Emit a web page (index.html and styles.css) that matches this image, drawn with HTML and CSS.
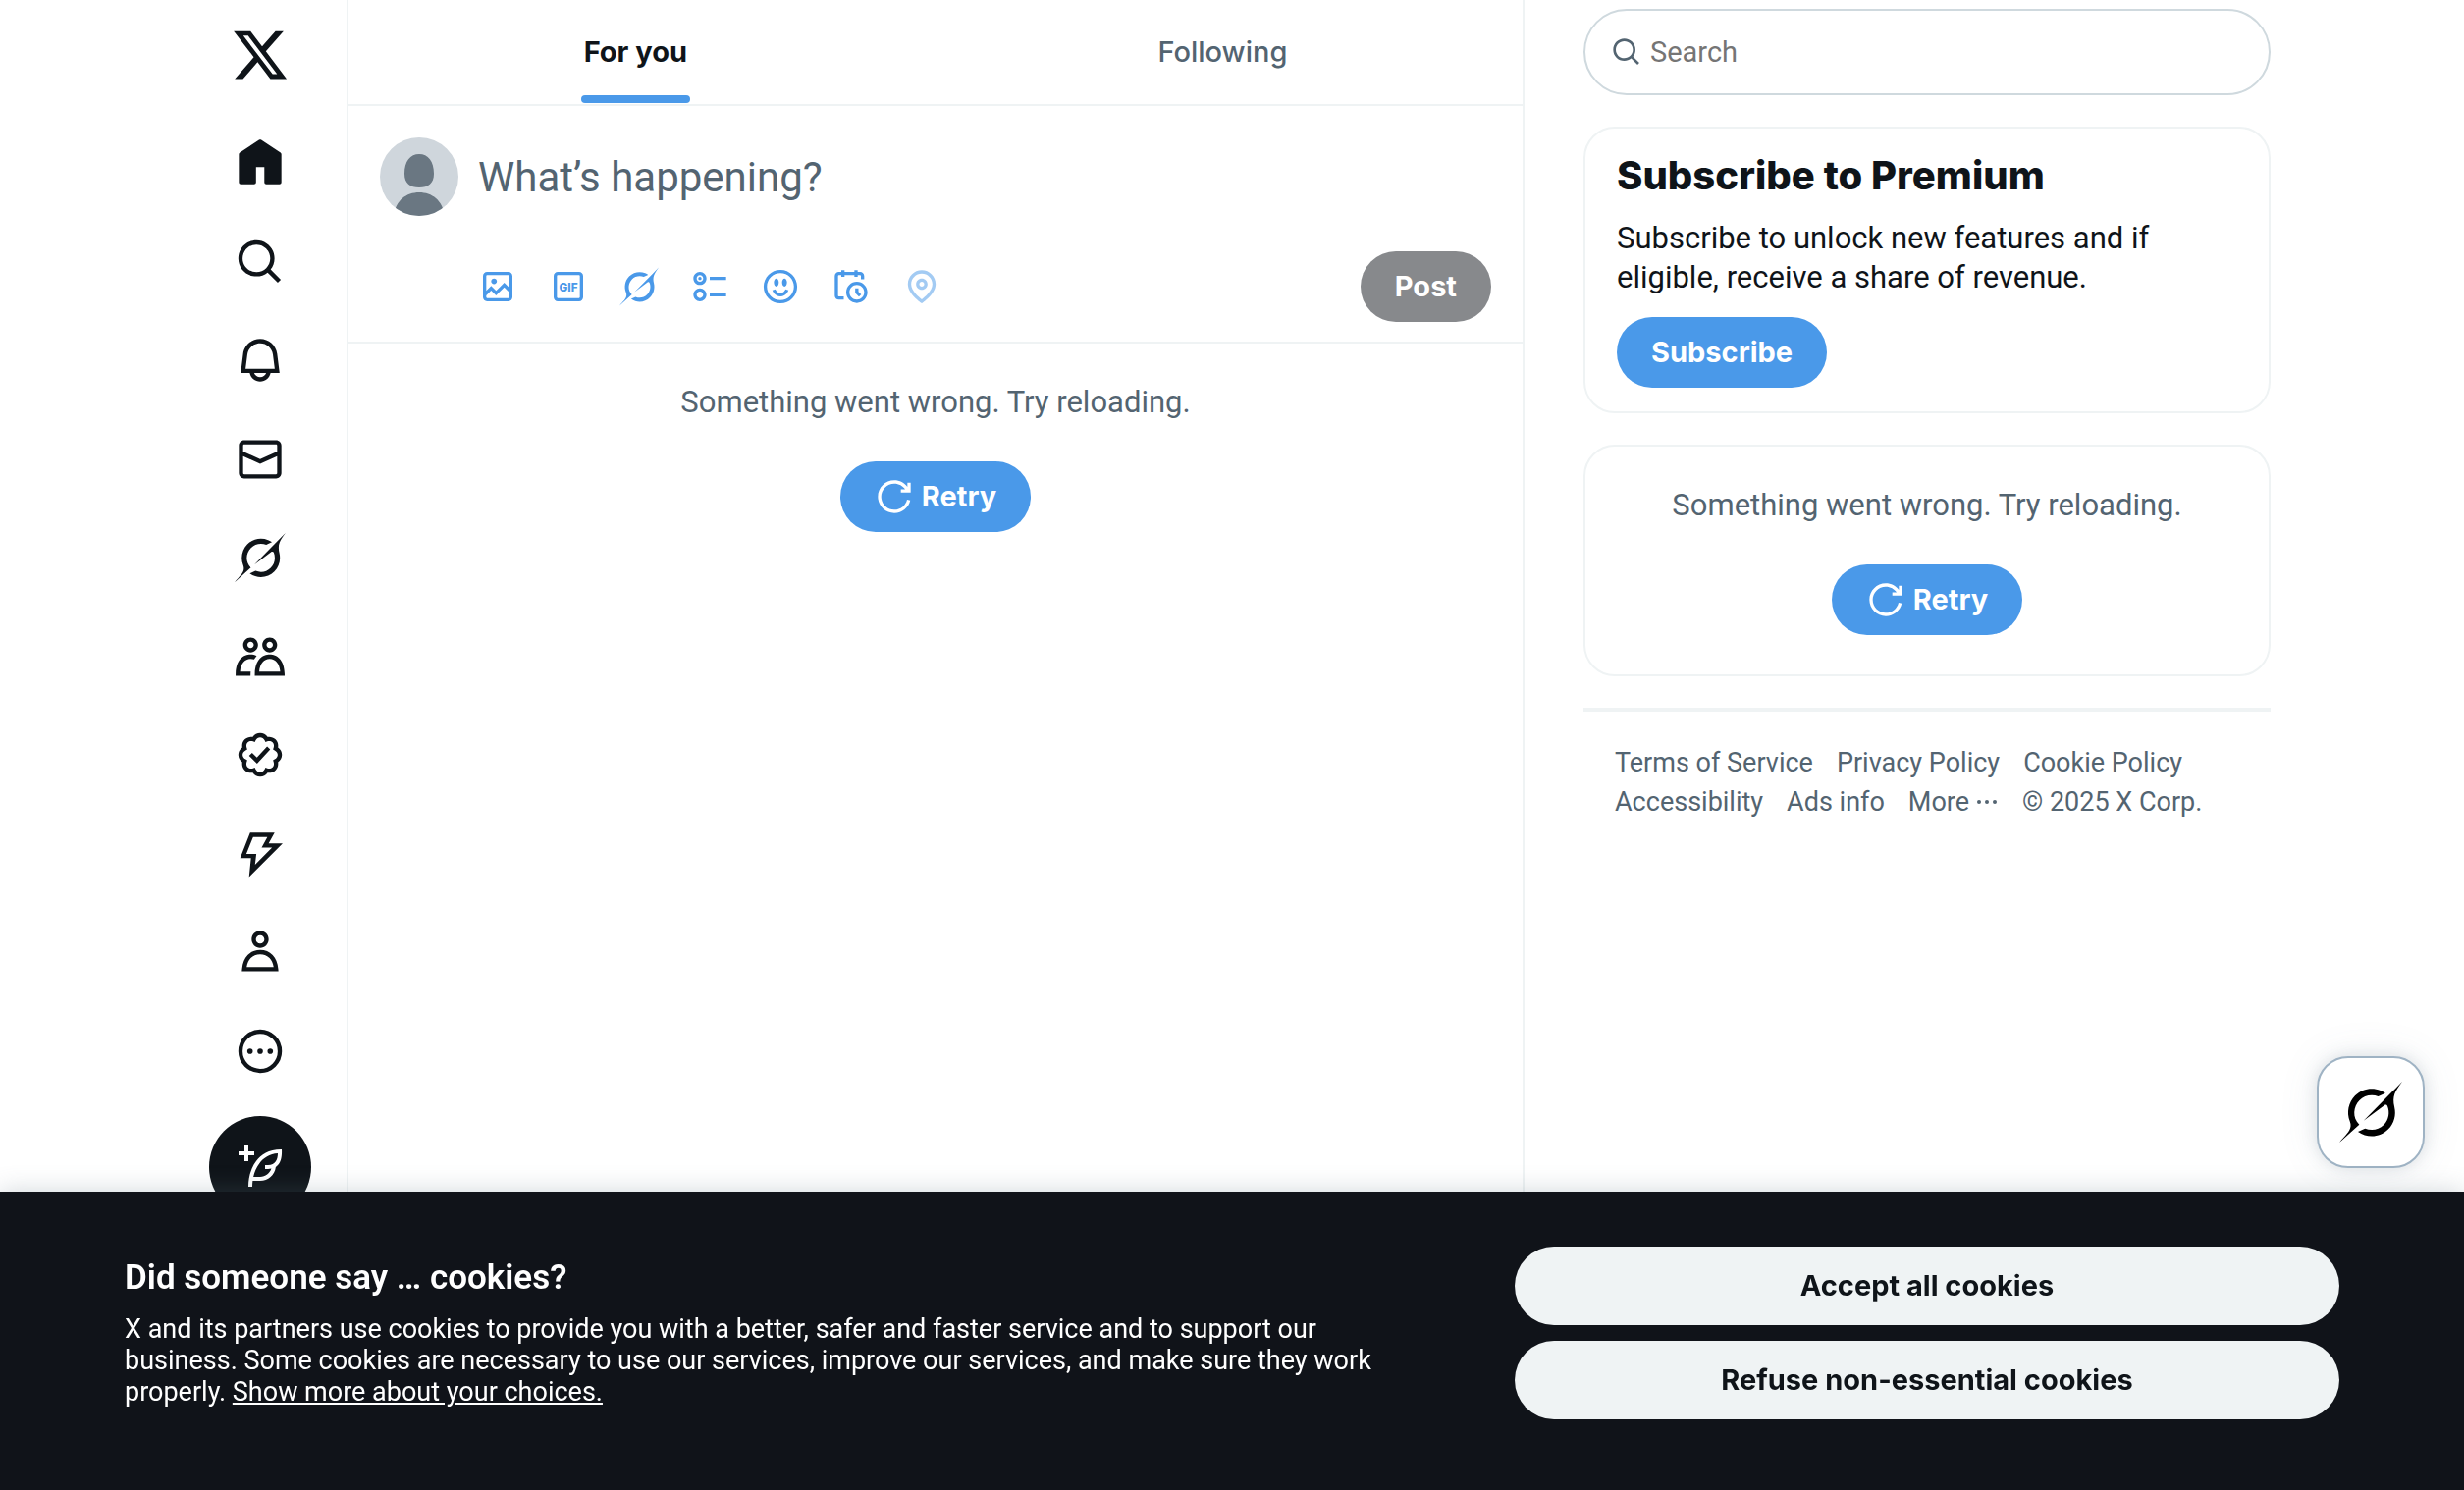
FILE: index.html
```
<!DOCTYPE html>
<html lang="en">
<head>
<meta charset="utf-8">
<meta name="viewport" content="width=device-width, initial-scale=1">
<title>Home / X</title>
<link rel="stylesheet" href="styles.css">
</head>
<body>
<svg class="sprite" aria-hidden="true">
  <symbol id="i-grok" viewBox="0 0 33 32"><path d="M12.745 20.54l10.97-8.19c.539-.4 1.307-.244 1.564.38 1.349 3.288.746 7.241-1.938 9.955-2.683 2.714-6.417 3.31-9.83 1.954l-3.728 1.745c5.347 3.697 11.84 2.782 15.898-1.324 3.219-3.255 4.216-7.692 3.284-11.693l.008.009c-1.351-5.878.332-8.227 3.782-13.031L33 0l-4.54 4.59v-.014L12.743 20.544m-2.263 1.987c-3.837-3.707-3.175-9.446.1-12.755 2.42-2.449 6.388-3.448 9.852-1.979l3.72-1.737c-.67-.49-1.53-1.017-2.515-1.387-4.455-1.854-9.789-.931-13.41 2.728-3.483 3.523-4.579 8.94-2.697 13.561 1.405 3.454-.899 5.898-3.22 8.364C1.49 30.2.666 31.074 0 32l10.478-9.466"/></symbol>
  <symbol id="i-search" viewBox="0 0 24 24"><path d="M10.25 3.75c-3.59 0-6.5 2.91-6.5 6.5s2.91 6.5 6.5 6.5c1.795 0 3.419-.726 4.596-1.904 1.178-1.177 1.904-2.801 1.904-4.596 0-3.59-2.91-6.5-6.5-6.5zm-8.5 6.5c0-4.694 3.806-8.5 8.5-8.5s8.5 3.806 8.5 8.5c0 1.986-.682 3.815-1.824 5.262l4.781 4.781-1.414 1.414-4.781-4.781c-1.447 1.142-3.276 1.824-5.262 1.824-4.694 0-8.5-3.806-8.5-8.5z"/></symbol>
  <symbol id="i-retry" viewBox="0 0 24 24"><path d="M12 4c-4.418 0-8 3.58-8 8s3.582 8 8 8c3.806 0 6.993-2.66 7.802-6.22l1.95.44C20.742 18.67 16.76 22 12 22 6.477 22 2 17.52 2 12S6.477 2 12 2c3.272 0 6.176 1.57 8 4V3.5h2v6h-6v-2h2.616C17.175 5.39 14.749 4 12 4z"/></symbol>
</svg>

<div class="layout">
  <header class="sidebar">
    <a class="logo" href="#" aria-label="X"><svg class="logo-icon" viewBox="0 0 24 24"><path d="M18.244 2.25h3.308l-7.227 8.26 8.502 11.24H16.17l-5.214-6.817L4.99 21.75H1.68l7.73-8.835L1.254 2.25H8.08l4.713 6.231zm-1.161 17.52h1.833L7.084 4.126H5.117z"/></svg></a>
    <nav class="nav" aria-label="Primary">
      <a href="#" aria-label="Home"><svg viewBox="0 0 24 24"><path d="M21.591 7.146L12.52 1.157c-.316-.21-.724-.21-1.04 0l-9.071 5.99c-.26.173-.409.456-.409.757v13.183c0 .502.418.913.929.913H9.14c.51 0 .929-.41.929-.913v-7.075h3.909v7.075c0 .502.417.913.928.913h6.165c.511 0 .929-.41.929-.913V7.904c0-.301-.158-.584-.408-.758z"/></svg></a>
      <a href="#" aria-label="Explore"><svg><use href="#i-search"/></svg></a>
      <a href="#" aria-label="Notifications"><svg viewBox="0 0 24 24"><path d="M19.993 9.042C19.48 5.017 16.054 1.996 11.996 1.996s-7.49 3.021-7.999 7.051L2.866 18H7.1c.463 2.282 2.481 4 4.9 4s4.437-1.718 4.9-4h4.236l-1.143-8.958zM12 20c-1.306 0-2.417-.835-2.829-2h5.658c-.412 1.165-1.523 2-2.829 2zm-6.866-4l.847-6.698C6.364 6.272 8.941 3.996 11.996 3.996s5.627 2.276 6.013 5.301L18.864 16H5.134z"/></svg></a>
      <a href="#" aria-label="Messages"><svg viewBox="0 0 24 24"><path d="M1.998 5.5c0-1.381 1.119-2.5 2.5-2.5h15c1.381 0 2.5 1.119 2.5 2.5v13c0 1.381-1.119 2.5-2.5 2.5h-15c-1.381 0-2.5-1.119-2.5-2.5v-13zm2.5-.5c-.276 0-.5.224-.5.5v2.764l8 3.638 8-3.636V5.5c0-.276-.224-.5-.5-.5h-15zm15.5 5.463l-8 3.636-8-3.638V18.5c0 .276.224.5.5.5h15c.276 0 .5-.224.5-.5v-8.037z"/></svg></a>
      <a href="#" aria-label="Grok"><svg><use href="#i-grok"/></svg></a>
      <a href="#" aria-label="Communities"><svg viewBox="0 0 24 24"><path d="M7.501 19.917L7.471 21H.472l.029-1.027c.184-6.618 3.736-8.977 7-8.977.963 0 1.95.212 2.87.672-.444.478-.851 1.03-1.212 1.656-.507-.204-1.054-.329-1.658-.329-2.767 0-4.57 2.223-4.938 6.004H7.56c-.023.302-.05.599-.059.918zm15.998.056L23.528 21H9.472l.029-1.027c.184-6.618 3.736-8.977 7-8.977s6.816 2.358 7 8.977zM21.437 19c-.367-3.781-2.17-6.004-4.938-6.004s-4.57 2.223-4.938 6.004h9.875zm-4.938-9c-.799 0-1.527-.279-2.116-.73-.836-.64-1.384-1.638-1.384-2.77 0-1.93 1.567-3.5 3.5-3.5s3.5 1.57 3.5 3.5c0 1.132-.548 2.13-1.384 2.77-.589.451-1.317.73-2.116.73zm-1.5-3.5c0 .827.673 1.5 1.5 1.5s1.5-.673 1.5-1.5-.673-1.5-1.5-1.5-1.5.673-1.5 1.5zM7.5 3C9.433 3 11 4.57 11 6.5S9.433 10 7.5 10 4 8.43 4 6.5 5.567 3 7.5 3zm0 2C6.673 5 6 5.673 6 6.5S6.673 8 7.5 8 9 7.327 9 6.5 8.327 5 7.5 5z"/></svg></a>
      <a href="#" aria-label="Premium"><svg viewBox="0 0 24 24"><path d="M8.52 3.59c.8-1.1 2.04-1.84 3.48-1.84s2.68.74 3.49 1.84c1.34-.21 2.74.14 3.76 1.16s1.37 2.42 1.16 3.77c1.1.8 1.84 2.04 1.84 3.48s-.74 2.68-1.84 3.48c.21 1.34-.14 2.75-1.16 3.77s-2.42 1.37-3.76 1.16c-.8 1.1-2.05 1.84-3.49 1.84s-2.68-.74-3.48-1.84c-1.34.21-2.75-.14-3.77-1.16-1.01-1.02-1.37-2.42-1.16-3.77-1.09-.8-1.84-2.04-1.84-3.48s.75-2.68 1.84-3.48c-.21-1.35.14-2.75 1.16-3.77s2.43-1.37 3.77-1.16zm3.48.16c-.85 0-1.66.53-2.12 1.43l-.38.77-.82-.27c-.96-.32-1.91-.12-2.51.49-.6.6-.8 1.54-.49 2.51l.27.81-.77.39c-.9.46-1.43 1.27-1.43 2.12s.53 1.66 1.43 2.12l.77.39-.27.81c-.31.97-.11 1.91.49 2.51.6.61 1.55.81 2.51.49l.82-.27.38.77c.46.9 1.27 1.43 2.12 1.43s1.66-.53 2.12-1.43l.39-.77.82.27c.96.32 1.9.12 2.51-.49.6-.6.8-1.55.48-2.51l-.26-.81.76-.39c.91-.46 1.43-1.27 1.43-2.12s-.52-1.66-1.43-2.12l-.77-.39.27-.81c.32-.97.12-1.91-.48-2.51-.61-.61-1.55-.81-2.51-.49l-.82.27-.39-.77c-.46-.9-1.27-1.43-2.12-1.43zm4.74 5.68l-6.2 6.77-3.74-3.74 1.41-1.42 2.26 2.26 4.8-5.23 1.47 1.36z"/></svg></a>
      <a href="#" aria-label="Business"><svg viewBox="0 0 24 24"><path fill-rule="evenodd" d="M7.3 2h11.5l-2.8 5h6.6L6.8 22.8 7.7 14H2.6L7.3 2zm1.4 2l-3.2 8h4.7l-.6 5.1L17.6 9h-4.9l2.7-5H8.7z"/></svg></a>
      <a href="#" aria-label="Profile"><svg viewBox="0 0 24 24"><path d="M5.651 19h12.698c-.337-1.8-1.023-3.21-1.945-4.19C15.318 13.65 13.838 13 12 13s-3.317.65-4.404 1.81c-.922.98-1.608 2.39-1.945 4.19zm.486-5.56C7.627 11.85 9.648 11 12 11s4.373.85 5.863 2.44c1.477 1.58 2.366 3.8 2.632 6.46l.11 1.1H3.395l.11-1.1c.266-2.66 1.155-4.88 2.632-6.46zM12 4c-1.105 0-2 .9-2 2s.895 2 2 2 2-.9 2-2-.895-2-2-2zM8 6c0-2.21 1.791-4 4-4s4 1.79 4 4-1.791 4-4 4-4-1.79-4-4z"/></svg></a>
      <a href="#" aria-label="More"><svg viewBox="0 0 24 24"><circle cx="12" cy="12" r="9.25" fill="none" stroke="currentColor" stroke-width="2"/><circle cx="7.25" cy="12" r="1.3"/><circle cx="12" cy="12" r="1.3"/><circle cx="16.75" cy="12" r="1.3"/></svg></a>
    </nav>
    <button class="compose" type="button" aria-label="Post"><svg viewBox="0 0 24 24"><path d="M23 3c-6.62-.1-10.38 2.421-13.05 6.03C7.29 12.61 6 17.331 6 22h2c0-1.007.07-2.012.19-3H12c4.1 0 7.48-3.1 7.94-7.054C22.79 10.147 23.17 6.359 23 3zm-7 8h-1.5v2H16c.63-.016 1.2-.08 1.72-.188C16.95 15.24 14.68 17 12 17H8.55c.57-2.512 1.57-4.851 3-6.78 2.16-2.912 5.29-4.911 9.45-5.187C20.95 8.079 19.9 11 16 11zM4 9V6H1V4h3V1h2v3h3v2H6v3H4z"/></svg></button>
  </header>

  <main class="feed">
    <nav class="tabs" aria-label="Timelines">
      <a class="tab tab-active" href="#"><span>For you</span></a>
      <a class="tab" href="#"><span>Following</span></a>
    </nav>
    <form class="composer">
      <div class="composer-row">
        <svg class="avatar" viewBox="0 0 80 80" role="img" aria-label="Your avatar"><defs><clipPath id="av"><circle cx="40" cy="40" r="40"/></clipPath></defs><g clip-path="url(#av)"><rect width="80" height="80" fill="#CFD6DC"/><path fill="#6A7782" d="M40 17c9 0 15 7 15 20 0 10-6 14-15 14s-15-4-15-14c0-13 6-20 15-20zM14 80c2-16 13-24 26-24s24 8 26 24z"/></g></svg>
        <input class="composer-input" type="text" placeholder="What’s happening?" aria-label="Post text">
      </div>
      <div class="toolbar">
        <div class="tools">
          <button type="button" aria-label="Media"><svg viewBox="0 0 24 24"><path d="M3 5.5C3 4.119 4.119 3 5.5 3h13C19.881 3 21 4.119 21 5.5v13c0 1.381-1.119 2.5-2.5 2.5h-13C4.119 21 3 19.881 3 18.5v-13zM5.5 5c-.276 0-.5.224-.5.5v9.086l3-3 3 3 5-5 3 3V5.5c0-.276-.224-.5-.5-.5h-13zM19 15.414l-3-3-5 5-3-3-3 3V18.5c0 .276.224.5.5.5h13c.276 0 .5-.224.5-.5v-3.086zM9.75 7C8.784 7 8 7.784 8 8.75s.784 1.75 1.75 1.75 1.75-.784 1.75-1.75S10.716 7 9.75 7z"/></svg></button>
          <button type="button" aria-label="GIF"><svg viewBox="0 0 24 24"><rect x="4" y="4" width="16" height="16" rx="1.5" fill="none" stroke="currentColor" stroke-width="2"/><text class="gif" x="12" y="14.7" text-anchor="middle">GIF</text></svg></button>
          <button type="button" aria-label="Grok image"><svg><use href="#i-grok"/></svg></button>
          <button type="button" aria-label="Poll"><svg viewBox="0 0 24 24"><path d="M6 5c-1.1 0-2 .895-2 2s.9 2 2 2 2-.895 2-2-.9-2-2-2zM2 7c0-2.209 1.79-4 4-4s4 1.791 4 4-1.79 4-4 4-4-1.791-4-4zm20 1H12V6h10v2zM6 15c-1.1 0-2 .895-2 2s.9 2 2 2 2-.895 2-2-.9-2-2-2zm-4 2c0-2.209 1.79-4 4-4s4 1.791 4 4-1.79 4-4 4-4-1.791-4-4zm20 1H12v-2h10v2zM7 7c0 .552-.45 1-1 1s-1-.448-1-1 .45-1 1-1 1 .448 1 1z"/></svg></button>
          <button type="button" aria-label="Emoji"><svg viewBox="0 0 24 24"><path d="M8 9.5C8 8.119 8.672 7 9.5 7S11 8.119 11 9.5 10.328 12 9.5 12 8 10.881 8 9.5zm6.5 2.5c.828 0 1.5-1.119 1.5-2.5S15.328 7 14.5 7 13 8.119 13 9.5s.672 2.5 1.5 2.5zM12 16c-2.224 0-3.021-2.227-3.051-2.316l-1.897.633c.05.15 1.271 3.684 4.949 3.684s4.898-3.533 4.949-3.684l-1.896-.638c-.033.095-.83 2.322-3.053 2.322zm10.25-4.001c0 5.652-4.598 10.25-10.25 10.25S1.75 17.652 1.75 12 6.348 1.75 12 1.75 22.25 6.348 22.25 12zm-2 0c0-4.549-3.701-8.25-8.25-8.25S3.75 7.451 3.75 12s3.701 8.25 8.25 8.25 8.25-3.701 8.25-8.25z"/></svg></button>
          <button type="button" aria-label="Schedule"><svg viewBox="0 0 24 24"><path d="M6 3V2h2v1h6V2h2v1h1.5C18.88 3 20 4.119 20 5.5v2h-2v-2c0-.276-.22-.5-.5-.5H16v1h-2V5H8v1H6V5H4.5c-.28 0-.5.224-.5.5v12c0 .276.22.5.5.5h3v2h-3C3.12 20 2 18.881 2 17.5v-12C2 4.119 3.12 3 4.5 3H6zm9.5 8c-2.49 0-4.5 2.015-4.5 4.5s2.01 4.5 4.5 4.5 4.5-2.015 4.5-4.5-2.01-4.5-4.5-4.5zM9 15.5C9 11.91 11.91 9 15.5 9s6.5 2.91 6.5 6.5-2.91 6.5-6.5 6.5S9 19.09 9 15.5zm5.5-2.5h2v2.086l1.71 1.707-1.42 1.414-2.29-2.293V13z"/></svg></button>
          <button type="button" aria-label="Location" disabled><svg viewBox="0 0 24 24"><path d="M12 7c-1.93 0-3.5 1.57-3.5 3.5S10.07 14 12 14s3.5-1.57 3.5-3.5S13.93 7 12 7zm0 5c-.827 0-1.5-.673-1.5-1.5S11.173 9 12 9s1.5.673 1.5 1.5S12.827 12 12 12zm0-10c-4.687 0-8.5 3.813-8.5 8.5 0 5.967 7.621 11.116 7.945 11.332l.555.37.555-.37c.324-.216 7.945-5.365 7.945-11.332C20.5 5.813 16.687 2 12 2zm0 17.77c-1.665-1.241-6.5-5.196-6.5-9.27C5.5 6.916 8.416 4 12 4s6.5 2.916 6.5 6.5c0 4.073-4.835 8.028-6.5 9.27z"/></svg></button>
        </div>
        <button class="pill post" type="submit" disabled>Post</button>
      </div>
    </form>
    <section class="error">
      <p>Something went wrong. Try reloading.</p>
      <button class="pill" type="button"><svg><use href="#i-retry"/></svg>Retry</button>
    </section>
  </main>

  <aside class="rail">
    <label class="search"><svg><use href="#i-search"/></svg><input type="text" placeholder="Search" aria-label="Search"></label>
    <section class="card premium">
      <h2>Subscribe to Premium</h2>
      <p>Subscribe to unlock new features and if eligible, receive a share of revenue.</p>
      <button class="pill" type="button">Subscribe</button>
    </section>
    <section class="card error">
      <p>Something went wrong. Try reloading.</p>
      <button class="pill" type="button"><svg><use href="#i-retry"/></svg>Retry</button>
    </section>
    <footer class="footer">
      <a href="#">Terms of Service</a>
      <a href="#">Privacy Policy</a>
      <a href="#">Cookie Policy</a>
      <a href="#">Accessibility</a>
      <a href="#">Ads info</a>
      <a class="more" href="#">More <svg viewBox="0 0 24 24"><circle cx="4" cy="12" r="2"/><circle cx="12" cy="12" r="2"/><circle cx="20" cy="12" r="2"/></svg></a>
      <span>© 2025 X Corp.</span>
    </footer>
  </aside>
</div>

<button class="grok-fab" type="button" aria-label="Open Grok"><svg><use href="#i-grok"/></svg></button>

<section class="cookies" aria-label="Cookie notice">
  <div class="cookies-inner">
    <div class="cookies-text">
      <h2>Did someone say … cookies?</h2>
      <p>X and its partners use cookies to provide you with a better, safer and faster service and to support our business. Some cookies are necessary to use our services, improve our services, and make sure they work properly. <a href="#">Show more about your choices.</a></p>
    </div>
    <div class="cookies-actions">
      <button type="button">Accept all cookies</button>
      <button type="button">Refuse non-essential cookies</button>
    </div>
  </div>
</section>
</body>
</html>
```
FILE: styles.css
```
:root {
  --ink: #0f1419;
  --muted: #536471;
  --line: #eff3f4;
  --blue: #4a99e9;
  --text: Roboto, "Liberation Sans", sans-serif;
  --bold: Inter, "Liberation Sans", sans-serif;
}

* { box-sizing: border-box; }

body {
  margin: 0;
  background: #fff;
  color: var(--ink);
  font-family: var(--text);
  font-size: 31px;
  line-height: 40px;
}

h2, p { margin: 0; }
a { color: inherit; text-decoration: none; }
svg { display: block; fill: currentColor; flex: none; }
button { border: 0; padding: 0; background: none; color: inherit; font: inherit; cursor: pointer; }
input { border: 0; padding: 0; outline: 0; background: none; min-width: 0; font: inherit; color: inherit; }
.sprite { display: none; }

.layout {
  display: grid;
  grid-template-columns: 176px minmax(0, 1200px) 780px;
  justify-content: center;
  height: 100vh;
  overflow: hidden;
}

/* Left navigation */
.sidebar {
  display: flex;
  flex-direction: column;
  align-items: center;
  padding: 4px 0;
}

.logo { padding: 22px; }
.logo-icon { width: 60px; height: 60px; }

.nav {
  display: flex;
  flex-direction: column;
  justify-content: space-between;
  min-height: 1005px;
  margin-top: 8px;
}

.nav a { padding: 24px; }
.nav svg { width: 52px; height: 52px; }

.compose {
  display: grid;
  place-items: center;
  width: 104px;
  height: 104px;
  margin-top: 16px;
  flex: none;
  border-radius: 50%;
  background: var(--ink);
  color: #fff;
}
.compose svg { width: 48px; height: 48px; }

/* Timeline */
.feed {
  border: solid var(--line);
  border-width: 0 2px;
}

.tabs {
  display: flex;
  height: 108px;
  border-bottom: 2px solid var(--line);
}

.tab {
  display: flex;
  flex: 1 1 auto;
  justify-content: center;
  color: var(--muted);
  font: 500 29px/40px var(--bold);
}
.tab span { padding: 33px 0; }
.tab-active { color: var(--ink); font-weight: 700; }
.tab-active span { position: relative; }
.tab-active span::after {
  content: "";
  position: absolute;
  inset: auto -3px 1px;
  height: 8px;
  border-radius: 4px;
  background: var(--blue);
}

.composer {
  padding: 32px 32px 20px;
  border-bottom: 2px solid var(--line);
}
.composer-row { display: flex; align-items: center; gap: 20px; }
.avatar { width: 80px; height: 80px; }
.composer-input { flex: 1; height: 80px; font-size: 42px; }
.composer-input::placeholder { color: var(--muted); opacity: 1; }

.toolbar {
  display: flex;
  align-items: center;
  justify-content: space-between;
  margin-top: 36px;
  padding-left: 84px;
}
.tools { display: flex; color: var(--blue); }
.tools button { padding: 16px; }
.tools svg { width: 40px; height: 40px; }
.tools button:disabled { opacity: .5; }
.gif { font: 800 7px var(--bold); }

.pill {
  display: inline-flex;
  align-items: center;
  justify-content: center;
  gap: 8px;
  height: 72px;
  padding: 0 35px;
  border-radius: 36px;
  background: var(--blue);
  color: #fff;
  font: 700 29px/40px var(--bold);
}
.pill svg { width: 40px; height: 40px; }
.post { background: #87898c; }

.error {
  display: flex;
  flex-direction: column;
  align-items: center;
  gap: 40px;
  padding: 40px;
  color: var(--muted);
}

/* Right column */
.rail {
  display: flex;
  flex-direction: column;
  gap: 32px;
  padding: 9px 20px 0 60px;
}

.search {
  display: flex;
  align-items: center;
  gap: 8px;
  height: 88px;
  padding: 0 26px;
  border: 2px solid #cfd9de;
  border-radius: 44px;
  color: var(--muted);
}
.search svg { width: 32px; height: 32px; }
.search input { flex: 1; font-size: 29px; }
.search input::placeholder { color: #757575; opacity: 1; }

.card { border: 2px solid var(--line); border-radius: 32px; }

.premium {
  display: flex;
  flex-direction: column;
  align-items: flex-start;
  gap: 20px;
  padding: 24px 32px;
}
.premium h2 { font: 800 40px/48px var(--bold); }

.footer {
  display: flex;
  flex-wrap: wrap;
  column-gap: 24px;
  padding: 32px;
  border-top: 4px solid var(--line);
  color: var(--muted);
  font-size: 27px;
}
.more { display: flex; align-items: center; gap: 6px; }
.more svg { width: 24px; height: 24px; }

/* Floating assistant button */
.grok-fab {
  position: fixed;
  right: 40px;
  bottom: 328px;
  display: grid;
  place-items: center;
  width: 110px;
  height: 114px;
  border: 2px solid #9fb3c4;
  border-radius: 32px;
  background: #fff;
  color: #000;
  box-shadow: 0 0 16px rgba(101, 119, 134, .2), 0 0 40px rgba(101, 119, 134, .1);
}
.grok-fab svg { width: 64px; height: 62px; }

/* Cookie notice */
.cookies {
  position: fixed;
  inset: auto 0 0;
  padding: 56px 40px 72px;
  background: #101319;
  color: #fff;
  box-shadow: 0 0 24px rgba(101, 119, 134, .3);
}
.cookies-inner {
  display: flex;
  align-items: center;
  justify-content: space-between;
  max-width: 2256px;
  margin: 0 auto;
}
.cookies-text { max-width: 1276px; font-size: 27px; line-height: 32px; }
.cookies-text h2 { margin-bottom: 16px; font: 600 35px/40px var(--text); }
.cookies-text a { text-decoration: underline; }

.cookies-actions { display: grid; gap: 16px; flex: 0 1 840px; }
.cookies-actions button {
  height: 80px;
  border-radius: 40px;
  background: #eff3f4;
  color: var(--ink);
  font: 700 29px/40px var(--bold);
}
```
